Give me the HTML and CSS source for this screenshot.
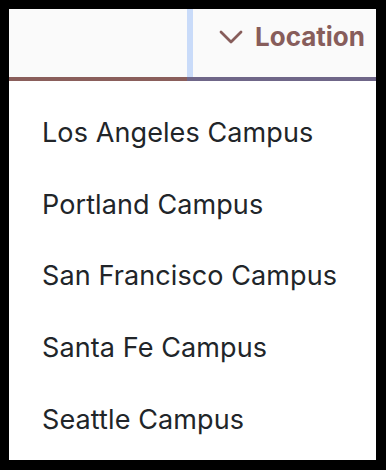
FILE: index.html
```html
<!DOCTYPE html>
<html lang="en">
<head>
<meta charset="utf-8">
<title>Location filter</title>
<link rel="stylesheet" href="styles.css">
</head>
<body>
<div class="frame">
  <div class="header">
    <div class="cell-left"></div>
    <div class="divider"></div>
    <div class="cell-right">
      <button class="toggle" type="button">
        <svg class="chev" width="24" height="14" viewBox="0 0 24 14" aria-hidden="true">
          <polyline points="2,2 12,12 22,2" fill="none" stroke="currentColor" stroke-width="2.8" stroke-linecap="round" stroke-linejoin="round"/>
        </svg>
        <span class="label">Location</span>
      </button>
    </div>
  </div>
  <ul class="menu">
    <li class="item">Los Angeles Campus</li>
    <li class="item">Portland Campus</li>
    <li class="item">San Francisco Campus</li>
    <li class="item">Santa Fe Campus</li>
    <li class="item">Seattle Campus</li>
  </ul>
</div>
</body>
</html>
```
FILE: styles.css
```css
html, body {
  margin: 0;
  padding: 0;
  background: #000;
}
body {
  font-family: Inter, "Noto Sans", sans-serif;
}
.frame {
  margin: 9px 0 0 9px;
  width: 367px;
  height: 451px;
  background: #fff;
  overflow: hidden;
}
.header {
  display: flex;
  height: 72px;
  background: #fafafa;
}
.cell-left {
  width: 178px;
  border-bottom: 4px solid #8a5e5b;
}
.divider {
  width: 6px;
  background: #c9dbf9;
  border-bottom: 4px solid #6f6688;
}
.cell-right {
  flex: 1;
  border-bottom: 4px solid #6f6688;
  padding: 12px 0 0 26px;
}
.toggle {
  display: flex;
  align-items: center;
  gap: 12px;
  margin: 0;
  padding: 0;
  border: 0;
  background: none;
  color: #875d5b;
  font: inherit;
}
.chev {
  display: block;
  width: 24px;
  height: 14px;
}
.label {
  font-size: 26px;
  font-weight: 700;
  line-height: 31.5px;
}
.menu {
  list-style: none;
  margin: 0;
  padding: 16px 0 0 0;
}
.item {
  display: flex;
  align-items: center;
  height: 71.75px;
  padding-left: 33px;
  font-size: 27px;
  line-height: 32px;
  letter-spacing: 0.1px;
  color: #212529;
}
```
